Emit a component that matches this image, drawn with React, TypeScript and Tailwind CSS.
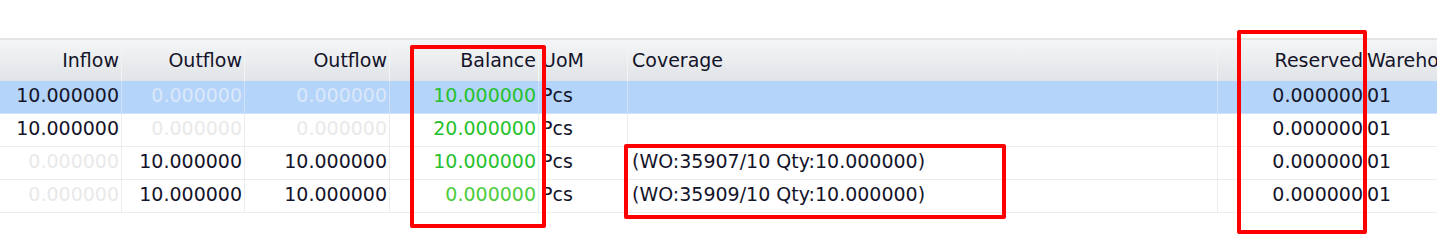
import React from 'react';

type Row = {
	inflow: string;
	outA: string;
	outB: string;
	balance: string;
	uom: string;
	coverage: string;
	reserved: string;
	warehouse: string;
	selected?: boolean;
};

const rows: Row[] = [
	{inflow: '10.000000', outA: '0.000000', outB: '0.000000', balance: '10.000000', uom: 'Pcs', coverage: '', reserved: '0.000000', warehouse: '01', selected: true},
	{inflow: '10.000000', outA: '0.000000', outB: '0.000000', balance: '20.000000', uom: 'Pcs', coverage: '', reserved: '0.000000', warehouse: '01'},
	{inflow: '0.000000', outA: '10.000000', outB: '10.000000', balance: '10.000000', uom: 'Pcs', coverage: '(WO:35907/10 Qty:10.000000)', reserved: '0.000000', warehouse: '01'},
	{inflow: '0.000000', outA: '10.000000', outB: '10.000000', balance: '0.000000', uom: 'Pcs', coverage: '(WO:35909/10 Qty:10.000000)', reserved: '0.000000', warehouse: '01'},
];

// dimmed zero amounts in the flow columns
function Amount({value, selected}: {value: string; selected?: boolean}) {
	const zero = value === '0.000000';
	const color = zero ? (selected ? 'text-[#dbe8f9]' : 'text-[#e9e9e9]') : 'text-[#14142a]';
	return <span className={color}>{value}</span>;
}

export default function App() {
	return (
		<div
			className="relative w-[1437px] h-[252px] overflow-hidden bg-white text-[19px] leading-none text-[#14142a]"
			style={{fontFamily: '"DejaVu Sans", sans-serif'}}>
			<div className="pt-[38px]">
				<div className="border-t-2 border-[#e4e4e4]">
					{/* header */}
					<div className="flex h-[41px] bg-gradient-to-b from-[#f4f5f6] to-[#e1e4e7]">
						<div className="w-[122px] flex items-center justify-end pr-[2px] border-r border-[#f3f4f5]">Inflow</div>
						<div className="w-[123px] flex items-center justify-end pr-[2px] border-r border-[#f3f4f5]">Outflow</div>
						<div className="w-[145px] flex items-center justify-end pr-[2px] border-r border-[#f3f4f5]">Outflow</div>
						<div className="w-[149px] flex items-center justify-end pr-[2px] border-r border-[#f3f4f5]">Balance</div>
						<div className="w-[89px] flex items-center pl-[3px] border-r border-[#f3f4f5]">UoM</div>
						<div className="w-[590px] flex items-center pl-[4px] border-r border-[#f3f4f5]">Coverage</div>
						<div className="w-[147px] flex items-center justify-end pr-[2px]">Reserved</div>
						<div className="flex-1 flex items-center pl-[2px] whitespace-nowrap overflow-hidden">Warehouse</div>
					</div>

					{rows.map((r, i) => {
						const line = r.selected ? 'border-[#cfe1fb]' : 'border-[#ececec]';
						return (
							<div
								key={i}
								className={`flex h-[33px] border-b ${line} ${r.selected ? 'bg-[#b4d4fa]' : 'bg-white'}`}>
								<div className={`w-[122px] flex items-center justify-end pr-[2px] pb-[3px] border-r ${line}`}>
									<Amount value={r.inflow} selected={r.selected}/>
								</div>
								<div className={`w-[123px] flex items-center justify-end pr-[2px] pb-[3px] border-r ${line}`}>
									<Amount value={r.outA} selected={r.selected}/>
								</div>
								<div className={`w-[145px] flex items-center justify-end pr-[2px] pb-[3px] border-r ${line}`}>
									<Amount value={r.outB} selected={r.selected}/>
								</div>
								<div className={`w-[149px] flex items-center justify-end pr-[2px] pb-[3px] border-r ${line} ${r.balance === '0.000000' ? 'text-[#4ccc3c]' : 'text-[#27c12f]'}`}>
									{r.balance}
								</div>
								<div className={`w-[89px] flex items-center pl-[2px] pb-[3px] border-r ${line}`}>{r.uom}</div>
								<div className={`w-[590px] flex items-center pl-[4px] pb-[3px] border-r ${line}`}>{r.coverage}</div>
								<div className="w-[147px] flex items-center justify-end pr-[2px] pb-[3px]">{r.reserved}</div>
								<div className="flex-1 flex items-center pl-[2px] pb-[3px]">{r.warehouse}</div>
							</div>
						);
					})}
				</div>
			</div>

			{/* red annotation frames */}
			<div className="absolute left-[410px] top-[45px] w-[136px] h-[183px] border-4 border-[#ff0000] rounded-[2px]"/>
			<div className="absolute left-[624px] top-[144px] w-[382px] h-[75px] border-4 border-[#ff0000] rounded-[2px]"/>
			<div className="absolute left-[1237px] top-[30px] w-[130px] h-[204px] border-4 border-[#ff0000] rounded-[2px]"/>
		</div>
	);
}
